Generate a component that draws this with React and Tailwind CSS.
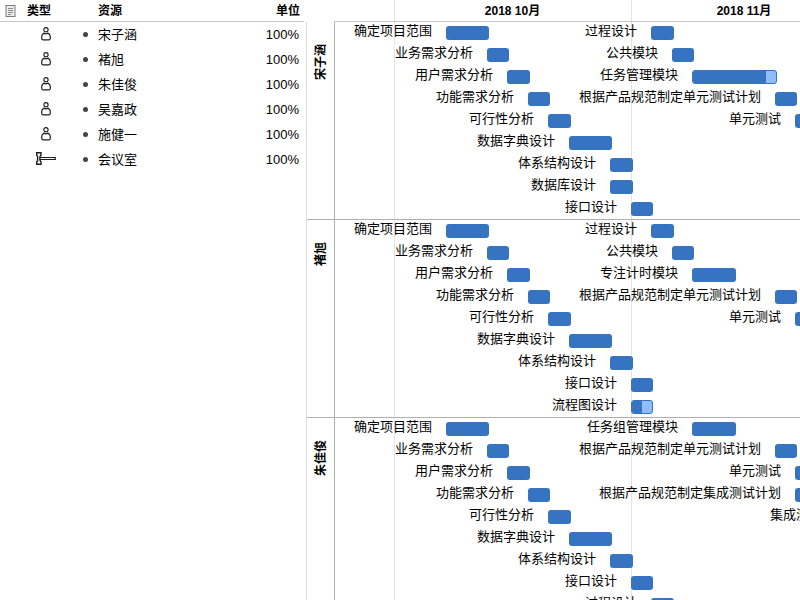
import React from "react";

const RESOURCES = [
  { name: "宋子涵", type: "person", units: "100%" },
  { name: "褚旭", type: "person", units: "100%" },
  { name: "朱佳俊", type: "person", units: "100%" },
  { name: "吴嘉政", type: "person", units: "100%" },
  { name: "施健一", type: "person", units: "100%" },
  { name: "会议室", type: "equipment", units: "100%" },
];

// Month widths on the timeline, after the tail of the previous month.
const MONTHS = [
  { label: "", width: 60 },
  { label: "2018 10月", width: 237 },
  { label: "2018 11月", width: 226 },
];

// start and length are in pixels from the left end of the timeline.
const task = (name, start, length, done = length) => ({ name, start, length, done });

const scope = task("确定项目范围", 111, 43);
const business = task("业务需求分析", 152, 22);
const user = task("用户需求分析", 172, 23);
const feature = task("功能需求分析", 193, 22);
const feasibility = task("可行性分析", 213, 23);
const dictionary = task("数据字典设计", 234, 43);
const architecture = task("体系结构设计", 275, 23);
const database = task("数据库设计", 275, 23);
const api = task("接口设计", 296, 22);
const flowchart = task("流程图设计", 296, 22, 10);
const process = task("过程设计", 316, 23);
const common = task("公共模块", 337, 22);
const unitPlan = task("根据产品规范制定单元测试计划", 440, 22);
const unitTest = task("单元测试", 460, 23);
const integrationPlan = task("根据产品规范制定集成测试计划", 460, 23);
const integrationTest = task("集成测试", 501, 23);

const SCHEDULES = [
  {
    owner: "宋子涵",
    rows: [
      [scope, process],
      [business, common],
      [user, task("任务管理模块", 357, 85, 73)],
      [feature, unitPlan],
      [feasibility, unitTest],
      [dictionary],
      [architecture],
      [database],
      [api],
    ],
  },
  {
    owner: "褚旭",
    rows: [
      [scope, process],
      [business, common],
      [user, task("专注计时模块", 357, 44)],
      [feature, unitPlan],
      [feasibility, unitTest],
      [dictionary],
      [architecture],
      [api],
      [flowchart],
    ],
  },
  {
    owner: "朱佳俊",
    rows: [
      [scope, task("任务组管理模块", 357, 44)],
      [business, unitPlan],
      [user, unitTest],
      [feature, integrationPlan],
      [feasibility, integrationTest],
      [dictionary],
      [architecture],
      [api],
      [process],
    ],
  },
];

function NoteIcon() {
  return (
    <svg className="block" width="11" height="12" viewBox="0 0 11 12" aria-hidden="true">
      <rect x="1" y="0.5" width="9" height="11" fill="#ededed" stroke="#7d7d7d" />
      <path d="M3 3.5h5M3 5.5h5M3 7.5h5M3 9.5h3" stroke="#8a8a8a" />
    </svg>
  );
}

function PersonIcon() {
  return (
    <svg className="block" width="10" height="14" viewBox="0 0 10 14" fill="none" stroke="#1c1c1c" role="img" aria-label="人员">
      <circle cx="5" cy="2.7" r="2.1" strokeWidth="1.1" />
      <path d="M3 6.1C1.4 6.9 .7 8.2 .7 9.8V11.6Q.7 12.8 1.9 12.8H8.1Q9.3 12.8 9.3 11.6V9.8C9.3 8.2 8.6 6.9 7 6.1C5.9 6.9 4.1 6.9 3 6.1Z" strokeWidth="1.2" strokeLinejoin="round" />
    </svg>
  );
}

function EquipmentIcon() {
  return (
    <svg className="block" width="20" height="13" viewBox="0 0 20 13" fill="#fff" stroke="#1c1c1c" role="img" aria-label="设备">
      <path d="M.7 .7H5V3.2L4.1 4.2V8.8L5 9.8V12.3H.7V9.8L1.6 8.8V4.2L.7 3.2Z" strokeWidth="1.4" />
      <path d="M4 5.5H19.3V7.5H4Z" strokeWidth="1.1" />
    </svg>
  );
}

function ResourceTable() {
  return (
    <table className="w-[304px] shrink-0 table-fixed border-separate border-spacing-0 self-start">
      <colgroup>
        <col className="w-[27px]" />
        <col className="w-[53px]" />
        <col className="w-[120px]" />
        <col />
      </colgroup>
      <thead>
        <tr className="h-[22px] text-left text-xs leading-5 font-bold">
          <th className="border-b border-[#c6c6c6] p-0 pl-[5px]" aria-label="备注">
            <NoteIcon />
          </th>
          <th className="border-b border-[#c6c6c6] p-0">类型</th>
          <th className="border-b border-[#c6c6c6] p-0 pl-[18px]">资源</th>
          <th className="border-b border-[#c6c6c6] p-0 pr-1 text-right">单位</th>
        </tr>
      </thead>
      <tbody>
        {RESOURCES.map((r) => (
          <tr key={r.name} className="h-[25px] text-[13px] leading-5">
            <td className="p-0" />
            <td className="p-0 pb-0.5">
              <div className="flex w-[38px] justify-center">
                {r.type === "person" ? <PersonIcon /> : <EquipmentIcon />}
              </div>
            </td>
            <td className="p-0">
              <div className="flex items-center gap-[10px] pl-[3px]">
                <span className="size-[5px] rounded-full bg-[#444]" />
                <span>{r.name}</span>
              </div>
            </td>
            <td className="p-0 pr-[5px] text-right">{r.units}</td>
          </tr>
        ))}
      </tbody>
    </table>
  );
}

function Bar({ length, done }) {
  const complete = done >= length;
  return (
    <div
      className={
        complete
          ? "h-3.5 shrink-0 rounded-[3px] bg-[#3673c0]"
          : "h-3.5 shrink-0 overflow-hidden rounded-[3px] border border-[#3673c0] bg-[#8fbcfb]"
      }
      style={{ width: length }}
    >
      {!complete && <div className="h-full bg-[#3673c0]" style={{ width: done }} />}
    </div>
  );
}

function TaskRow({ tasks }) {
  return (
    <div className="flex h-[22px] items-center">
      {tasks.map((t, i) => {
        const previous = tasks[i - 1];
        const from = previous ? previous.start + previous.length : 0;
        return (
          <React.Fragment key={t.name}>
            <div
              className="flex shrink-0 justify-end pr-3.5 pb-1 text-[13px] leading-[18px] whitespace-nowrap"
              style={{ width: t.start - from }}
            >
              {t.name}
            </div>
            <Bar length={t.length} done={t.done} />
          </React.Fragment>
        );
      })}
    </div>
  );
}

function Timeline() {
  return (
    <div className="relative ml-0.5 flex min-w-0 flex-1 flex-col overflow-hidden">
      <div className="absolute inset-y-0 left-[29px] flex" aria-hidden="true">
        {MONTHS.map((m, i) => (
          <div key={i} className="shrink-0 border-r border-[#e4e4e4]" style={{ width: m.width }} />
        ))}
      </div>
      <div className="relative ml-7 flex h-[22px] shrink-0 border-b border-[#c6c6c6]">
        {MONTHS.map((m, i) => (
          <div
            key={i}
            className="shrink-0 text-center text-xs leading-[22px] font-bold"
            style={{ width: m.width }}
          >
            {m.label}
          </div>
        ))}
      </div>
      <div className="relative border-l border-[#dcdcdc]">
        {SCHEDULES.map((s) => (
          <section key={s.owner} className="flex h-[198px] border-b border-[#b0b0b0]">
            <h2 className="flex w-7 shrink-0 items-center justify-end border-r border-[#b0b0b0] pt-[22px] text-xs leading-4 font-bold [writing-mode:vertical-rl]">
              <span className="mb-auto rotate-180 [text-orientation:sideways]">{s.owner}</span>
            </h2>
            <div className="min-w-0 flex-1">
              {s.rows.map((tasks, i) => (
                <TaskRow key={i} tasks={tasks} />
              ))}
            </div>
          </section>
        ))}
      </div>
    </div>
  );
}

export default function App() {
  return (
    <main className="flex h-screen overflow-hidden bg-white font-['Liberation_Sans','Noto_Sans_CJK_SC',sans-serif] text-black">
      <ResourceTable />
      <Timeline />
    </main>
  );
}
